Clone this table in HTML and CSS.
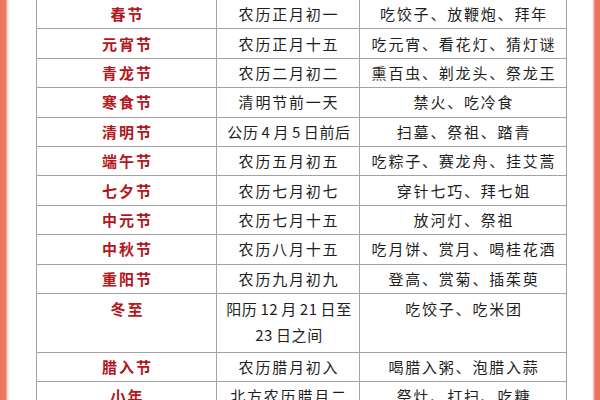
FILE: index.html
```html
<!DOCTYPE html>
<html lang="zh-CN">
<head>
<meta charset="utf-8">
<title>传统节日习俗</title>
<link rel="stylesheet" href="styles.css">
</head>
<body>
<div class="page">
  <div class="strip strip-left"></div>
  <main class="sheet">
    <table class="festivals">
      <colgroup>
        <col class="c-name">
        <col class="c-date">
        <col class="c-custom">
      </colgroup>
      <tbody>
        <tr><td class="name">春节</td><td>农历正月初一</td><td>吃饺子、放鞭炮、拜年</td></tr>
        <tr><td class="name">元宵节</td><td>农历正月十五</td><td>吃元宵、看花灯、猜灯谜</td></tr>
        <tr><td class="name">青龙节</td><td>农历二月初二</td><td>熏百虫、剃龙头、祭龙王</td></tr>
        <tr><td class="name">寒食节</td><td>清明节前一天</td><td>禁火、吃冷食</td></tr>
        <tr><td class="name">清明节</td><td class="tight">公历 4 月 5 日前后</td><td>扫墓、祭祖、踏青</td></tr>
        <tr><td class="name">端午节</td><td>农历五月初五</td><td>吃粽子、赛龙舟、挂艾蒿</td></tr>
        <tr><td class="name">七夕节</td><td>农历七月初七</td><td>穿针七巧、拜七姐</td></tr>
        <tr><td class="name">中元节</td><td>农历七月十五</td><td>放河灯、祭祖</td></tr>
        <tr><td class="name">中秋节</td><td>农历八月十五</td><td>吃月饼、赏月、喝桂花酒</td></tr>
        <tr><td class="name">重阳节</td><td>农历九月初九</td><td>登高、赏菊、插茱萸</td></tr>
        <tr class="tall"><td class="name">冬至</td><td class="tight">阳历 12 月 21 日至<br>23 日之间</td><td>吃饺子、吃米团</td></tr>
        <tr><td class="name">腊入节</td><td>农历腊月初入</td><td>喝腊入粥、泡腊入蒜</td></tr>
        <tr><td class="name">小年</td><td>北方农历腊月二</td><td>祭灶、打扫、吃糖</td></tr>
      </tbody>
    </table>
  </main>
  <div class="strip strip-right"></div>
</div>
</body>
</html>
```

FILE: styles.css
```css
html, body {
  margin: 0;
  padding: 0;
  background: #ffffff;
}

.page {
  display: flex;
  width: 600px;
  height: 400px;
  overflow: hidden;
  background: #ffffff;
}

.strip {
  flex: 0 0 auto;
  height: 100%;
}

.strip-left {
  width: 10px;
  background: linear-gradient(to right, #ec735f 0, #ee7a66 6px, #f9d3c9 7px, #fff6f3 9px, #ffffff 10px);
}

.strip-right {
  width: 9px;
  background: linear-gradient(to right, #ffffff 0, #fbe8e3 1px, #f3a596 2px, #ee7664 3px, #ec705d 9px);
}

.sheet {
  flex: 1 1 auto;
  padding: 0 25px 0 26px;
}

.festivals {
  width: 530px;
  border-collapse: collapse;
  table-layout: fixed;
  font-family: "Noto Sans CJK SC", "Noto Sans", sans-serif;
  font-size: 15px;
  color: #1e1e1e;
}

.c-name { width: 180px; }
.c-date { width: 143px; }
.c-custom { width: 207px; }

.festivals td {
  height: 28.4px;
  padding: 0 0 0 2px;
  border: 1px solid #a3a3a3;
  text-align: center;
  vertical-align: middle;
  letter-spacing: 1.8px;
  line-height: 20px;
  white-space: nowrap;
}

.festivals tr:first-child td {
  border-top: 0;
}

.festivals td.name {
  color: #b3161c;
  font-weight: 700;
  letter-spacing: 2px;
}

.festivals td.tight {
  letter-spacing: 0.6px;
  word-spacing: -1px;
}

.festivals tr.tall td {
  height: 56px;
  vertical-align: top;
  line-height: 26px;
  padding-top: 2px;
}
```
